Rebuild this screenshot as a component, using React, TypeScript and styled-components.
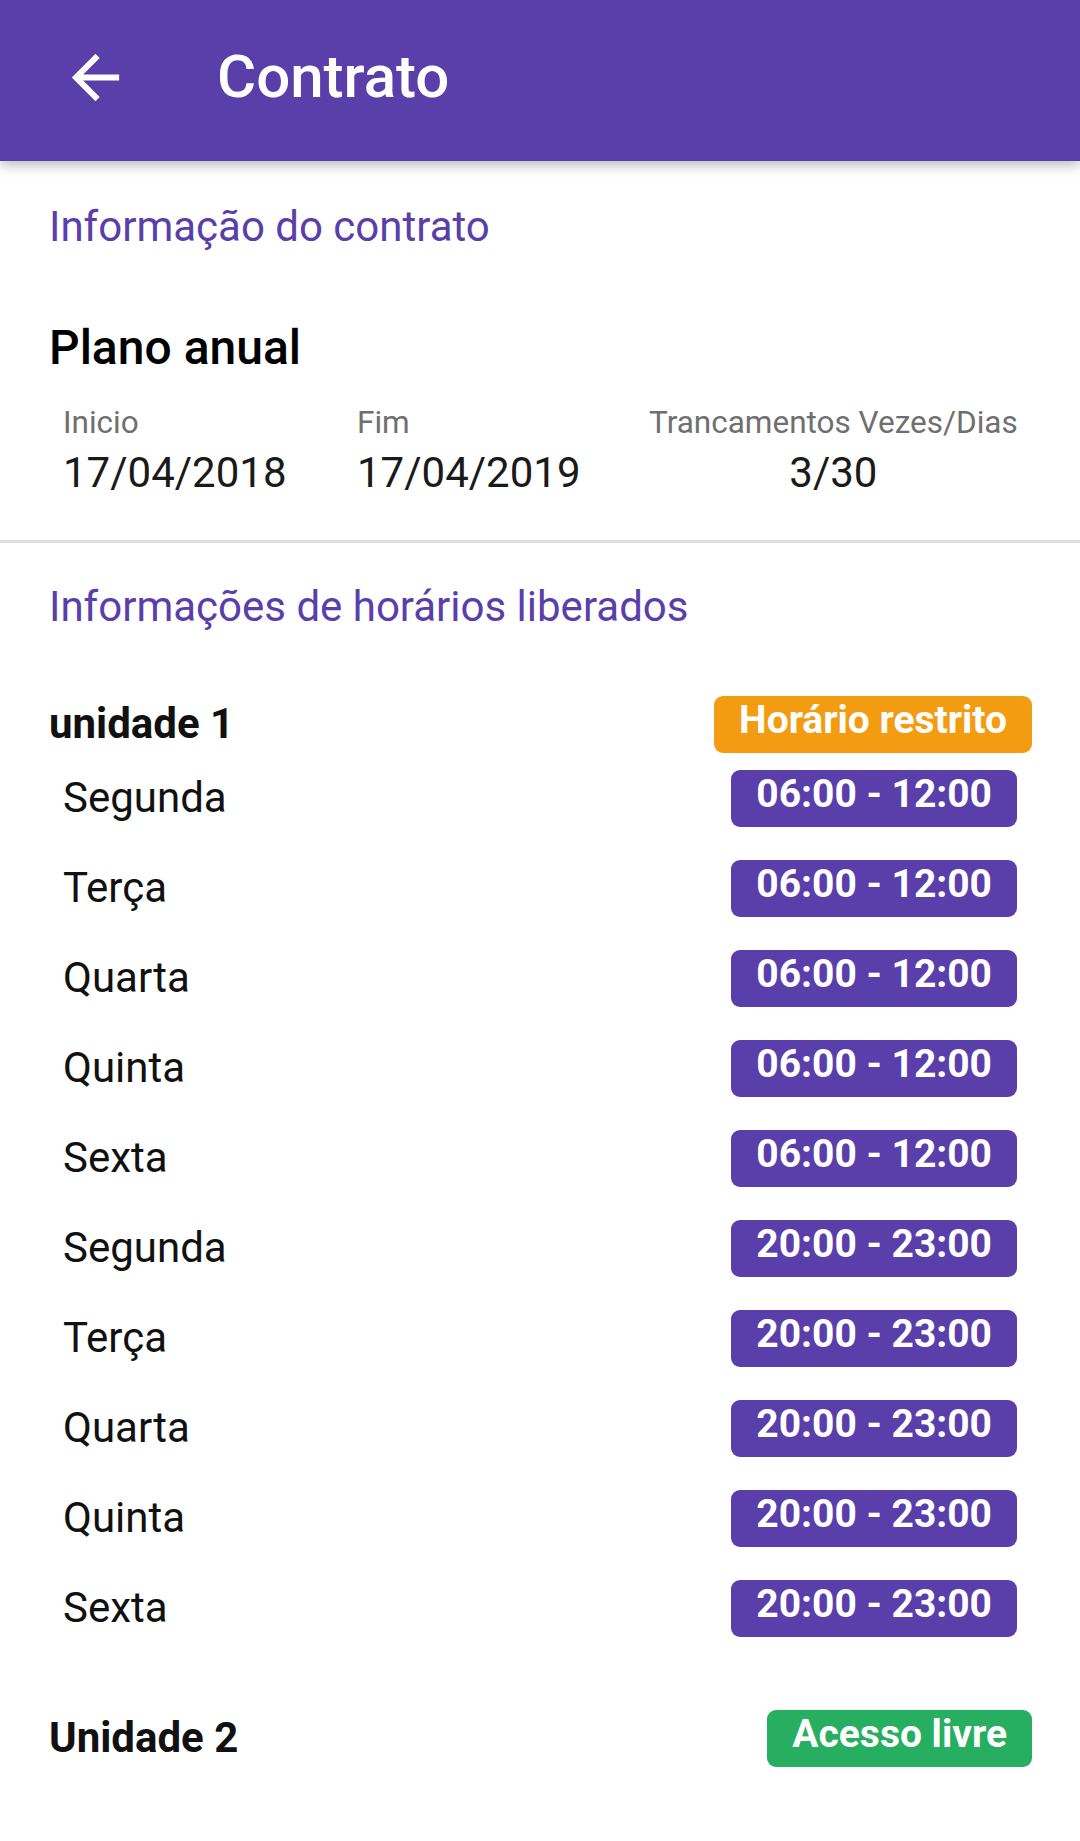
import React from 'react';
import styled, { createGlobalStyle } from 'styled-components';

const purple = '#5a3ea9';

const GlobalStyle = createGlobalStyle`
  body {
    margin: 0;
    background: #fff;
    font-family: Roboto, 'Noto Sans', sans-serif;
  }
`;

const Page = styled.div`
  width: 1080px;
  min-height: 1841px;
  background: #fff;
`;

const Toolbar = styled.header`
  height: 161px;
  background: ${purple};
  display: flex;
  align-items: center;
  box-shadow: 0 4px 12px rgba(0, 0, 0, 0.28);
  position: relative;
`;

const BackButton = styled.div`
  width: 71px;
  height: 71px;
  margin-left: 60px;
  margin-top: -7px;
  display: flex;
  align-items: center;
  justify-content: center;
`;

const Title = styled.h1`
  margin: -7px 0 0 86px;
  font-size: 60px;
  font-weight: 500;
  color: #fff;
  line-height: 70px;
`;

const Section = styled.section<{ $top: number; $bottom: number }>`
  padding: ${p => p.$top}px 48px ${p => p.$bottom}px 49px;
`;

const SectionTitle = styled.h2`
  margin: 0;
  font-size: 42px;
  font-weight: 400;
  line-height: 52px;
  color: ${purple};
`;

const PlanName = styled.div`
  margin-top: 67px;
  font-size: 48px;
  font-weight: 500;
  line-height: 56px;
  color: #000;
`;

const InfoGrid = styled.div`
  display: grid;
  grid-template-columns: 294px 292px max-content;
  padding-left: 14px;
  margin-top: 29px;
`;

const InfoCol = styled.div<{ $center?: boolean }>`
  display: flex;
  flex-direction: column;
  align-items: ${p => (p.$center ? 'center' : 'flex-start')};
`;

const Label = styled.div`
  font-size: 31.5px;
  line-height: 36px;
  color: #6f6f6f;
  margin-bottom: 8px;
`;

const Value = styled.div`
  font-size: 42px;
  line-height: 48px;
  color: #1a1a1a;
`;

const Divider = styled.hr`
  margin: 0;
  border: none;
  height: 3px;
  background: #dedede;
`;

const UnitRow = styled.div<{ $gap: number }>`
  display: flex;
  align-items: center;
  justify-content: space-between;
  height: 58px;
  margin-top: ${p => p.$gap}px;
`;

const UnitName = styled.div`
  font-size: 42px;
  font-weight: 700;
  color: #111;
  line-height: 48px;
`;

const DayRow = styled.div`
  display: flex;
  align-items: center;
  justify-content: space-between;
  height: 90px;
  padding: 0 15px 0 14px;
`;

const DayName = styled.div`
  font-size: 42px;
  color: #111;
  line-height: 44px;
`;

const Badge = styled.div<{ $bg: string }>`
  background: ${p => p.$bg};
  color: #fff;
  font-weight: 700;
  font-size: 39px;
  height: 57px;
  line-height: 49px;
  padding: 0 25px 8px;
  box-sizing: border-box;
  border-radius: 9px;
  white-space: nowrap;
`;

const ArrowBack = () => (
  <svg width="71" height="71" viewBox="0 0 24 24" fill="#fff">
    <path d="M20 11H7.83l5.59-5.59L12 4l-8 8 8 8 1.41-1.41L7.83 13H20v-2z" />
  </svg>
);

const unit1 = [
  ['Segunda', '06:00 - 12:00'],
  ['Terça', '06:00 - 12:00'],
  ['Quarta', '06:00 - 12:00'],
  ['Quinta', '06:00 - 12:00'],
  ['Sexta', '06:00 - 12:00'],
  ['Segunda', '20:00 - 23:00'],
  ['Terça', '20:00 - 23:00'],
  ['Quarta', '20:00 - 23:00'],
  ['Quinta', '20:00 - 23:00'],
  ['Sexta', '20:00 - 23:00'],
];

const App = () => {
  return (
    <Page>
      <GlobalStyle />
      <Toolbar>
        <BackButton><ArrowBack /></BackButton>
        <Title>Contrato</Title>
      </Toolbar>
      <Section $top={40} $bottom={43}>
        <SectionTitle>Informação do contrato</SectionTitle>
        <PlanName>Plano anual</PlanName>
        <InfoGrid>
          <InfoCol>
            <Label>Inicio</Label>
            <Value>17/04/2018</Value>
          </InfoCol>
          <InfoCol>
            <Label>Fim</Label>
            <Value>17/04/2019</Value>
          </InfoCol>
          <InfoCol $center>
            <Label>Trancamentos Vezes/Dias</Label>
            <Value>3/30</Value>
          </InfoCol>
        </InfoGrid>
      </Section>
      <Divider />
      <Section $top={38} $bottom={40}>
        <SectionTitle>Informações de horários liberados</SectionTitle>
        <UnitRow $gap={62}>
          <UnitName>unidade 1</UnitName>
          <Badge $bg="#f39c12">Horário restrito</Badge>
        </UnitRow>
        {unit1.map(([day, time], i) => (
          <DayRow key={i}>
            <DayName>{day}</DayName>
            <Badge $bg={purple}>{time}</Badge>
          </DayRow>
        ))}
        <UnitRow $gap={56}>
          <UnitName>Unidade 2</UnitName>
          <Badge $bg="#27ae60">Acesso livre</Badge>
        </UnitRow>
      </Section>
    </Page>
  );
};

export default App;
